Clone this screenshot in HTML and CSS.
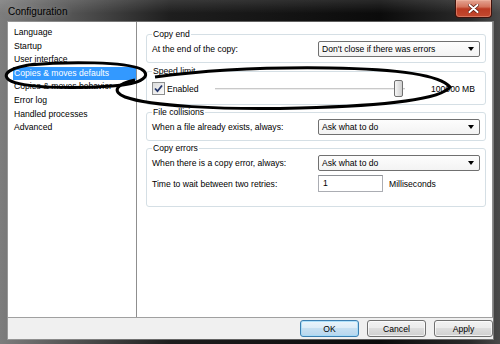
FILE: index.html
```html
<!DOCTYPE html>
<html lang="en">
<head>
  <meta charset="UTF-8" />
  <title>Configuration</title>
  <link rel="stylesheet" href="styles.css">
</head>
<body>
  <div class="window">
    <div class="titlebar">
      <span class="title">Configuration</span>
      <span class="close">
        <svg width="11" height="9" viewBox="0 0 11 9">
          <path d="M1.5 1 L9.5 8 M9.5 1 L1.5 8" stroke="#5a1a10" stroke-width="3.4" stroke-linecap="round" />
          <path d="M1.5 1 L9.5 8 M9.5 1 L1.5 8" stroke="#fff" stroke-width="2" stroke-linecap="round" />
        </svg>
      </span>
    </div>

    <div class="client">
      <div class="main">
        <ul class="nav-list">
          <li>Language</li>
          <li>Startup</li>
          <li>User interface</li>
          <li class="selected">Copies &amp; moves defaults</li>
          <li>Copies &amp; moves behavior</li>
          <li>Error log</li>
          <li>Handled processes</li>
          <li>Advanced</li>
        </ul>

        <div class="panel">
          <fieldset class="group">
            <legend>Copy end</legend>
            <div class="row">
              <span class="label">At the end of the copy:</span>
              <div class="combo">Don't close if there was errors</div>
            </div>
          </fieldset>

          <fieldset class="group group-speed">
            <legend>Speed limit</legend>
            <div class="row">
              <label class="check">
                <span class="box">
                  <svg width="11" height="11" viewBox="0 0 11 11">
                    <path d="M2 5.5 L4.5 8.2 L9 2.5" fill="none" stroke="#24366b" stroke-width="1.8" />
                  </svg>
                </span>
                Enabled
              </label>
              <div class="slider"><span class="thumb"></span></div>
              <span class="speed-value">100000 MB</span>
            </div>
          </fieldset>

          <fieldset class="group">
            <legend>File collisions</legend>
            <div class="row">
              <span class="label">When a file already exists, always:</span>
              <div class="combo">Ask what to do</div>
            </div>
          </fieldset>

          <fieldset class="group group-errors">
            <legend>Copy errors</legend>
            <div class="row">
              <span class="label">When there is a copy error, always:</span>
              <div class="combo">Ask what to do</div>
            </div>
            <div class="row">
              <span class="label">Time to wait between two retries:</span>
              <div class="input">1</div>
              <span class="unit">Milliseconds</span>
            </div>
          </fieldset>
        </div>
      </div>

      <div class="buttons">
        <button class="btn btn-default">OK</button>
        <button class="btn">Cancel</button>
        <button class="btn">Apply</button>
      </div>
    </div>

    <!-- hand drawn marks over the screenshot -->
    <svg class="marks" width="500" height="344" viewBox="0 0 500 344">
      <path d="M28 65 C70 61 125 62 141 69 C152 75 144 84 112 86 C72 89 22 88 9 80 C1 74 10 67 36 64" fill="none" stroke="#000" stroke-width="3" />
      <path d="M155 77 C200 71 260 67 330 68 C400 69 440 75 450 87 C440 100 380 106 300 108 C220 110 150 106 125 97 C112 92 115 84 135 80" fill="none" stroke="#000" stroke-width="3" />
    </svg>
  </div>
</body>
</html>
```

FILE: styles.css
```css
* {
  margin: 0;
  padding: 0;
  box-sizing: border-box;
}

html, body {
  width: 500px;
  height: 344px;
  overflow: hidden;
  background: #000;
  font-family: 'Liberation Sans', Arial, sans-serif;
  font-size: 8.6px;
  color: #000;
}

.window {
  position: relative;
  width: 500px;
  height: 344px;
  display: flex;
  flex-direction: column;
  background: linear-gradient(90deg, #7d7d7d 0, #5a5a5a 60px, #1e1e1e 170px, #0b0b0b 380px, #2a2a2a 470px, #4a4a4a 500px);
}

.titlebar {
  height: 22px;
  display: flex;
  justify-content: space-between;
  align-items: flex-start;
  background: linear-gradient(rgba(255, 255, 255, 0.12), rgba(255, 255, 255, 0) 60%);
}

.title {
  padding: 6px 0 0 8px;
  font-size: 10px;
  line-height: 12px;
  color: #000;
  text-shadow: 0 0 6px rgba(255, 255, 255, 0.35);
}

.close {
  width: 37px;
  height: 18px;
  margin-right: 8px;
  display: flex;
  align-items: center;
  justify-content: center;
  border: 1px solid #3e120c;
  border-top: none;
  border-radius: 0 0 4px 4px;
  background: linear-gradient(#e4a593 0%, #d4735c 40%, #bb3a22 52%, #c34a30 100%);
  box-shadow: inset 0 0 0 1px rgba(255, 200, 180, 0.35);
}

.client {
  flex: 1;
  margin: 0 7px 5px 8px;
  display: flex;
  flex-direction: column;
  background: #f0f0f0;
  box-shadow: 0 0 0 1px rgba(190, 190, 190, 0.45);
}

.main {
  flex: 1;
  display: flex;
  border-bottom: 1px solid #a0a0a0;
}

.nav-list {
  width: 128px;
  list-style: none;
  padding: 4px 0 0 5px;
  background: #fff;
}

.nav-list li {
  line-height: 13.6px;
  padding-left: 1px;
  white-space: nowrap;
}

.nav-list li.selected {
  background: #3399ff;
  color: #fff;
}

.panel {
  flex: 1;
  background: #fff;
  border-left: 1px solid #8f8f8f;
  border-right: 1px solid #8f8f8f;
  padding: 7px 6px 0 9px;
}

.group {
  min-width: 0;
  margin: 0 0 2px;
  border: 1px solid #d5dfe5;
  border-radius: 3px;
  padding: 0 5px 5px;
}

.group:first-child {
  margin-bottom: 3px;
}

.group legend {
  padding: 0 1px;
  line-height: 11px;
}

.group-speed {
  padding-top: 3px;
  padding-bottom: 7px;
}

.group-errors {
  padding-bottom: 14px;
}

.group-errors .row + .row {
  margin-top: 4px;
}

.row {
  display: flex;
  align-items: center;
  height: 17px;
}

.label {
  width: 166px;
  white-space: nowrap;
}

.combo {
  position: relative;
  width: 162px;
  height: 16px;
  line-height: 14px;
  padding-left: 3px;
  border: 1px solid #707070;
  border-radius: 2px;
  background: linear-gradient(#fdfdfd, #f3f3f3);
  white-space: nowrap;
}

.combo::after {
  content: '';
  position: absolute;
  right: 5px;
  top: 5px;
  border-left: 3.5px solid transparent;
  border-right: 3.5px solid transparent;
  border-top: 4px solid #000;
}

.input {
  width: 65px;
  height: 17px;
  line-height: 15px;
  padding-left: 4px;
  border: 1px solid #abadb3;
  border-top-color: #8e9196;
  background: #fff;
}

.unit {
  margin-left: 6px;
}

.check {
  width: 63px;
  display: flex;
  align-items: center;
  gap: 2px;
}

.box {
  width: 13px;
  height: 13px;
  display: flex;
  align-items: center;
  justify-content: center;
  border: 1px solid #8e8f8f;
  background: linear-gradient(135deg, #dcdcdc, #fcfcfc);
}

.slider {
  width: 190px;
  height: 17px;
  display: flex;
  justify-content: flex-end;
  padding-right: 2px;
  background: linear-gradient(#c9c9c9, #c9c9c9) center / 100% 1px no-repeat,
              linear-gradient(#eeeeee, #eeeeee) 0 9px / 100% 1px no-repeat;
}

.thumb {
  width: 9px;
  height: 17px;
  border: 1px solid #707070;
  border-radius: 2px;
  background: linear-gradient(90deg, #f6f6f6, #e2e2e2 50%, #d0d0d0);
}

.speed-value {
  flex: 1;
  text-align: right;
  padding-right: 5px;
  white-space: nowrap;
}

.buttons {
  height: 21px;
  display: flex;
  justify-content: flex-end;
  gap: 8px;
  padding-top: 2px;
}

.btn {
  width: 59px;
  height: 17px;
  font-family: inherit;
  font-size: 8.6px;
  color: #000;
  border: 1px solid #707070;
  border-radius: 3px;
  background: linear-gradient(#f2f2f2 0%, #ebebeb 49%, #dddddd 50%, #cfcfcf 100%);
  box-shadow: inset 0 0 0 1px rgba(255, 255, 255, 0.7);
}

.btn-default {
  border-color: #3c7fb1;
  background: linear-gradient(#eaf5fc 0%, #dcecf7 49%, #c6e0f2 50%, #b8d6ee 100%);
  box-shadow: inset 0 0 0 1px rgba(160, 220, 250, 0.8);
}

.marks {
  position: absolute;
  top: 0;
  left: 0;
  pointer-events: none;
}
```
